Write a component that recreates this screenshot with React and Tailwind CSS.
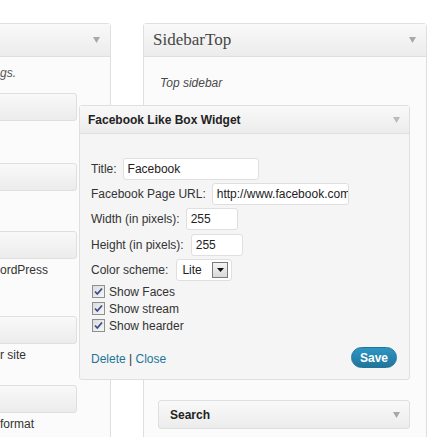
import React from 'react';

const Arrow = ({ className = 'text-[#a8a8a8]' }) => (
  <svg width="7" height="6" viewBox="0 0 7 6" className={className}>
    <path d="M0 0h7L3.5 6z" fill="currentColor" />
  </svg>
);

const Check = () => (
  <span className="flex h-[13px] w-[13px] shrink-0 items-center justify-center border border-[#8e8f8f] bg-gradient-to-br from-[#dcdcdc] to-[#f7f7f7]">
    <svg width="9" height="9" viewBox="0 0 9 9">
      <path d="M1 4.5l2.3 2.5L8 1.5" fill="none" stroke="#3a4c8e" strokeWidth="1.8" />
    </svg>
  </span>
);

// widget boxes in the left column, titles scrolled off to the left
const avail = [
  { h: 'h-[70px]', desc: '' },
  { h: 'h-[68px]', desc: '' },
  { h: 'h-[85px]', desc: 'ordPress' },
  { h: 'h-[69px]', desc: 'r site' },
  { h: 'h-[60px]', desc: 'format' },
];

export default function App() {
  return (
    <div className="h-[437px] w-[435px] overflow-hidden bg-white pt-[23px] font-['Liberation_Sans',Arial,sans-serif] text-[12px] text-[#333]">
      <div className="flex gap-[32px]">
        {/* Available widgets */}
        <div className="ml-[-150px] h-[420px] w-[261px] shrink-0 rounded-t-[4px] border border-b-0 border-[#dfdfdf] bg-[#fbfbfb]">
          <div className="flex h-[33px] items-center justify-end border-b border-[#dfdfdf] bg-gradient-to-b from-[#f9f9f9] to-[#ececec] pr-[10px]">
            <Arrow />
          </div>
          <div className="pl-[10px] pr-[33px] pt-[8px]">
            <p className="ml-[139px] whitespace-nowrap italic leading-[16px] text-[#555]">gs.</p>
            <div className="mt-[12px]">
              {avail.map((a, i) => (
                <div key={i} className={a.h}>
                  <div className="h-[28px] rounded-[3px] border border-[#dfdfdf] bg-gradient-to-b from-[#f9f9f9] to-[#ececec]" />
                  {a.desc && (
                    <p className="ml-[139px] mt-[3px] whitespace-nowrap leading-[17px]">{a.desc}</p>
                  )}
                </div>
              ))}
            </div>
          </div>
        </div>

        {/* SidebarTop */}
        <div className="h-[420px] w-[284px] shrink-0 rounded-t-[4px] border border-b-0 border-[#dfdfdf] bg-[#fbfbfb]">
          <div className="flex h-[33px] items-center justify-between border-b border-[#dfdfdf] bg-gradient-to-b from-[#f9f9f9] to-[#ececec] pl-[9px] pr-[10px]">
            <span className="font-['Liberation_Serif',Georgia,serif] text-[17px] text-[#464646]">SidebarTop</span>
            <Arrow />
          </div>
          <div className="pl-[14px] pr-[16px] pt-[18px]">
            <p className="pl-[2px] italic leading-[16px] text-[#4a4a4a]">Top sidebar</p>

            {/* expanded widget */}
            <div className="relative z-10 ml-[-79px] mt-[14px] w-[331px] rounded-[3px] border border-[#dfdfdf] bg-[#f5f5f5]">
              <div className="flex h-[28px] items-center justify-between border-b border-[#dfdfdf] bg-gradient-to-b from-[#f9f9f9] to-[#ececec] pl-[8px] pr-[9px]">
                <span className="font-bold text-[#222]">Facebook Like Box Widget</span>
                <Arrow className="text-[#bbb]" />
              </div>
              <div className="pb-[11px] pl-[11px] pr-[12px] pt-[24px]">
                <div className="flex h-[22px] items-center gap-[6px]">
                  <span>Title:</span>
                  <div className="flex h-[22px] w-[136px] items-center rounded-[3px] border border-[#dfdfdf] bg-white pl-[4px] text-[#222]">Facebook</div>
                </div>
                <div className="mt-[3px] flex h-[22px] items-center gap-[6px]">
                  <span>Facebook Page URL:</span>
                  <div className="flex h-[22px] w-[137px] items-center overflow-hidden whitespace-nowrap rounded-[3px] border border-[#dfdfdf] bg-white pl-[4px] text-[#222]">http://www.facebook.com/platform</div>
                </div>
                <div className="mt-[3px] flex h-[22px] items-center gap-[6px]">
                  <span>Width (in pixels):</span>
                  <div className="flex h-[22px] w-[52px] items-center rounded-[3px] border border-[#dfdfdf] bg-white pl-[4px] text-[#222]">255</div>
                </div>
                <div className="mt-[4px] flex h-[22px] items-center gap-[6px]">
                  <span>Height (in pixels):</span>
                  <div className="ml-[1px] flex h-[22px] w-[52px] items-center rounded-[3px] border border-[#dfdfdf] bg-white pl-[4px] text-[#222]">255</div>
                </div>
                <div className="mt-[3px] flex h-[22px] items-center gap-[6px]">
                  <span>Color scheme:</span>
                  <div className="ml-[2px] flex h-[22px] w-[56px] items-center justify-between rounded-[3px] border border-[#dfdfdf] bg-white pl-[5px] pr-[3px] text-[#222]">
                    <span>Lite</span>
                    <span className="flex h-[16px] w-[16px] items-center justify-center border border-[#7a7a7a] bg-gradient-to-b from-[#f4f4f4] to-[#d9d9d9]">
                      <svg width="7" height="4" viewBox="0 0 7 4">
                        <path d="M0 0h7L3.5 4z" fill="#111" />
                      </svg>
                    </span>
                  </div>
                </div>
                <div className="mt-[2px] pl-[1px]">
                  {['Show Faces', 'Show stream', 'Show hearder'].map((t) => (
                    <div key={t} className="flex h-[17px] items-center gap-[4px]">
                      <Check />
                      <span>{t}</span>
                    </div>
                  ))}
                </div>
                <div className="mt-[13px] flex h-[21px] items-center justify-between">
                  <span className="pt-[2px]">
                    <span className="text-[#21759b]">Delete</span> | <span className="text-[#21759b]">Close</span>
                  </span>
                  <span className="flex h-[21px] w-[46px] items-center justify-center rounded-full border border-[#21759b] bg-gradient-to-b from-[#2e95c4] to-[#21759b] font-bold text-white">
                    Save
                  </span>
                </div>
              </div>
            </div>

            {/* collapsed widget */}
            <div className="mt-[20px] flex h-[29px] items-center justify-between rounded-[3px] border border-[#dfdfdf] bg-gradient-to-b from-[#f9f9f9] to-[#ececec] pl-[11px] pr-[9px]">
              <span className="font-bold text-[#222]">Search</span>
              <Arrow />
            </div>
          </div>
        </div>
      </div>
    </div>
  );
}
